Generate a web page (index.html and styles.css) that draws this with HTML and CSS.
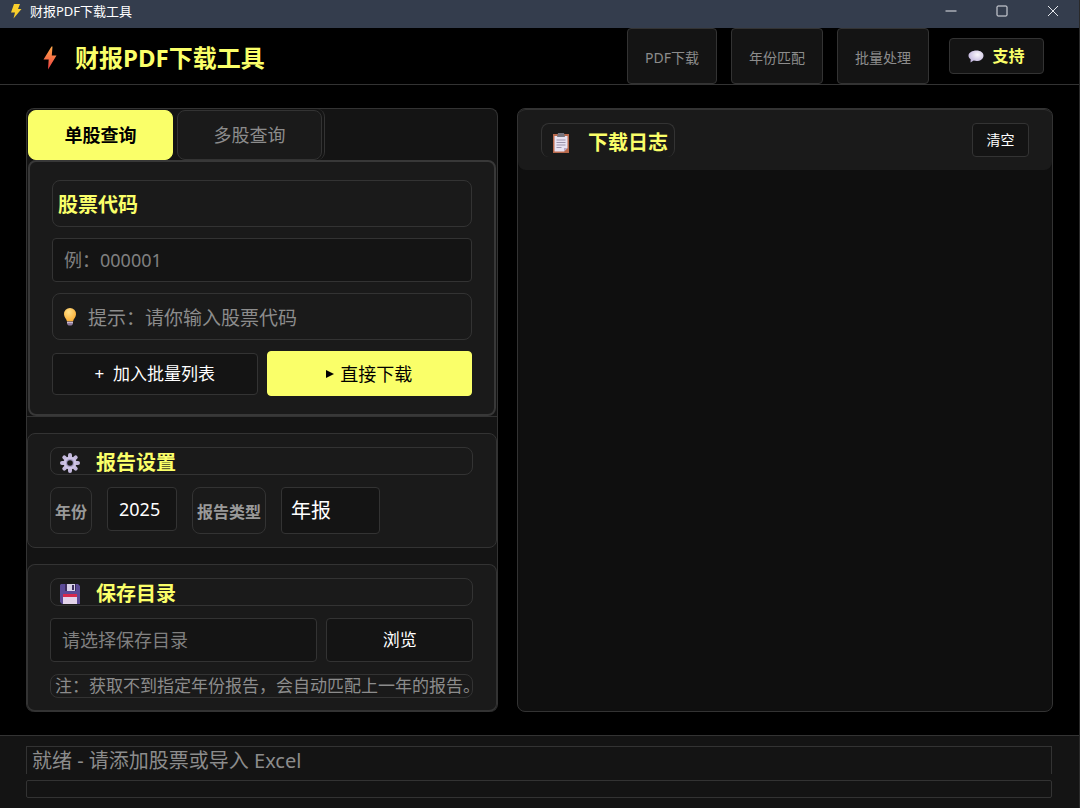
FILE: index.html
```html
<!DOCTYPE html>
<html lang="zh-CN">
<head>
    <meta charset="utf-8">
    <title>财报PDF下载工具</title>
    <link rel="stylesheet" href="styles.css">
</head>
<body>
    <div class="titlebar">
        <svg class="titlebar-icon" width="12" height="16" viewBox="0 0 12 16"><path d="M4 1h6L8 6h3.500L3.500 15.500 5 9.500H1z" fill="#f9cf2c"/></svg>
        <span class="titlebar-text">财报PDF下载工具</span>
        <button class="win-btn" aria-label="最小化"><svg width="12" height="12" viewBox="0 0 12 12"><path d="M.5 6h11"/></svg></button>
        <button class="win-btn" aria-label="最大化"><svg width="12" height="12" viewBox="0 0 12 12"><rect x="1" y="1" width="10" height="10" rx="1"/></svg></button>
        <button class="win-btn" aria-label="关闭"><svg width="12" height="12" viewBox="0 0 12 12"><path d="M1 1l10 10M11 1L1 11"/></svg></button>
    </div>

    <header class="header">
        <svg width="14" height="24" viewBox="0 0 14 24">
            <defs><linearGradient id="bolt" x1="0" y1="0" x2="0" y2="1"><stop offset="0" stop-color="#ffa94a"/><stop offset="1" stop-color="#ee3d42"/></linearGradient></defs>
            <path d="M8.500.5L.5 13.500h5.200L5 23.500 13.500 9.500H8.800L9.500.5z" fill="url(#bolt)"/>
        </svg>
        <h1>财报PDF下载工具</h1>
        <nav class="nav">
            <a href="#" class="nav-item">PDF下载</a>
            <a href="#" class="nav-item">年份匹配</a>
            <a href="#" class="nav-item">批量处理</a>
        </nav>
        <button class="btn support">
            <svg width="16" height="13" viewBox="0 0 16 13">
                <defs><radialGradient id="bubble" cx=".6" cy=".35" r=".7"><stop offset="0" stop-color="#faf7fb"/><stop offset="1" stop-color="#bdb0da"/></radialGradient></defs>
                <path d="M8.500.5C12.600.5 15.500 2.700 15.500 5.700s-3 5.300-7 5.300c-1 0-2-.1-2.800-.4L2.500 12.500l.2-3.200C1.300 8.400.5 7.200.5 5.700.5 2.700 4.300.5 8.500.5z" fill="url(#bubble)"/>
            </svg>
            支持
        </button>
    </header>

    <main class="main">
        <section class="panel">
            <div class="tab-view">
                <div class="tabs">
                    <button class="tab active">单股查询</button>
                    <button class="tab">多股查询</button>
                </div>
                <div class="query">
                    <label class="box query-label" for="code">股票代码</label>
                    <input class="field" id="code" type="text" placeholder="例：000001">
                    <div class="box hint">
                        <svg width="14" height="20" viewBox="0 0 14 20">
                            <defs><radialGradient id="bulb" cx=".4" cy=".3" r=".7"><stop offset="0" stop-color="#ffe08a"/><stop offset="1" stop-color="#fbae35"/></radialGradient></defs>
                            <path d="M7 1a6 6 0 0 1 6 6.200c0 3-2.500 4.300-3 7.300H4C3.500 11.500 1 10.200 1 7.200A6 6 0 0 1 7 1z" fill="url(#bulb)"/>
                            <path d="M4 14.500h6V17l-1.500 1.500h-3L4 17z" fill="#8f7b9c"/>
                            <path d="M4 15.500h6" stroke="#c9bbd0"/>
                        </svg>
                        提示：请你输入股票代码
                    </div>
                    <div class="actions">
                        <button class="btn add">+&nbsp; 加入批量列表</button>
                        <button class="btn download">
                            <svg width="8" height="8" viewBox="0 0 8 8"><path d="M0 0l8 4-8 4z" fill="#000"/></svg>
                            直接下载
                        </button>
                    </div>
                </div>
            </div>

            <div class="group settings">
                <h2 class="box group-title">
                    <svg width="20" height="20" viewBox="0 0 20 20">
                        <g stroke="#c3b8dc" stroke-width="4" stroke-linecap="round"><path d="M10 2v16M2 10h16M4.300 4.300l11.400 11.400M15.700 4.300L4.300 15.700"/></g>
                        <circle cx="10" cy="10" r="6.500" fill="#cdc3e4"/>
                        <circle cx="10" cy="10" r="4" fill="#a69bc4"/>
                        <circle cx="10" cy="10" r="2.800" fill="#1a1a1a"/>
                    </svg>
                    报告设置
                </h2>
                <div class="row">
                    <label class="box row-label" for="year">年份</label>
                    <input class="field year" id="year" type="text" value="2025">
                    <label class="box row-label" for="type">报告类型</label>
                    <select class="field type" id="type">
                        <option>年报</option>
                    </select>
                </div>
            </div>

            <div class="group save">
                <h2 class="box group-title">
                    <svg width="20" height="20" viewBox="0 0 20 20">
                        <path d="M1 0h17l2 2v18H2l-2-2V1z" fill="#5b4a96"/>
                        <path d="M5 0h11v7H5z" fill="#3c2c5e"/>
                        <path d="M7 0h8v7H7z" fill="#d9d2e8"/>
                        <path d="M12 1h2v5h-2z" fill="#3c2c5e"/>
                        <path d="M3 10h14v10H3z" fill="#e3d3ea"/>
                        <path d="M3 10h14v3H3z" fill="#d5294d"/>
                    </svg>
                    保存目录
                </h2>
                <div class="path">
                    <input class="field" type="text" aria-label="保存目录" placeholder="请选择保存目录">
                    <button class="btn">浏览</button>
                </div>
                <p class="box note">注：获取不到指定年份报告，会自动匹配上一年的报告。</p>
            </div>
        </section>

        <section class="log">
            <div class="log-header">
                <h2 class="log-title">
                    <svg width="16" height="20" viewBox="0 0 16 20">
                        <path d="M0 1h16v19H0z" fill="#b9694c"/>
                        <path d="M1.500 3h13v12L11 18.500H1.500z" fill="#e8e2f2"/>
                        <path d="M14.500 15H11v3.500z" fill="#b9aacb"/>
                        <path d="M5 0h6l1 4H4z" fill="#77747d"/>
                        <path d="M3.500 7h9M3.500 9.500h9M3.500 12h9M3.500 14.500h5" stroke="#9d94ad"/>
                    </svg>
                    下载日志
                </h2>
                <button class="btn clear">清空</button>
            </div>
            <textarea class="log-text" aria-label="下载日志" readonly></textarea>
        </section>
    </main>

    <footer class="statusbar">
        <div class="status">就绪 - 请添加股票或导入 Excel</div>
        <div class="progress" role="progressbar" aria-label="下载进度"></div>
    </footer>
</body>
</html>
```

FILE: styles.css
```css
* {
    box-sizing: border-box;
}
body {
    margin: 0;
    min-height: 100vh;
    display: flex;
    flex-direction: column;
    border-right: 1px solid #2a2a2a;
    background: #000;
    color: #fff;
    font-family: "Noto Sans", "Noto Sans CJK SC", sans-serif;
}
h1, h2, p {
    margin: 0;
}
svg {
    flex: none;
}
button, input, select, textarea {
    font-family: inherit;
    color: inherit;
    margin: 0;
}

/* window title bar */
.titlebar {
    display: flex;
    align-items: center;
    height: 28px;
    margin-right: -1px;
    padding: 0 2px 6px 10px;
    background: #343d4d;
    font-size: 13px;
    line-height: 20px;
}
.titlebar-text {
    margin: 0 auto 0 8px;
}
.win-btn {
    width: 51px;
    height: 22px;
    padding: 0;
    border: 0;
    background: none;
}
.win-btn svg {
    display: block;
    margin: auto;
    fill: none;
    stroke: #e4e7ec;
}

/* header */
.header {
    display: flex;
    align-items: center;
    height: 57px;
    padding: 0 35px 0 43px;
    border-bottom: 1px solid #333;
}
.header h1 {
    margin: 0 auto 0 18px;
    padding-top: 4px;
    font-size: 24px;
    line-height: 32px;
    color: #faff69;
}
.header > svg {
    margin-top: 4px;
}
.nav {
    display: flex;
    align-self: stretch;
    gap: 14px;
    margin-right: 20px;
}
.nav-item {
    display: flex;
    align-items: center;
    padding: 2px 17px 0;
    border: 1px solid #333;
    border-radius: 4px;
    background: #141414;
    color: #8c8c8c;
    font-size: 14px;
    text-decoration: none;
}
.btn {
    display: flex;
    align-items: center;
    justify-content: center;
    padding: 0;
    border: 1px solid #333;
    border-radius: 4px;
    background: #141414;
    font-size: 17px;
    line-height: 24px;
}
.support {
    gap: 8px;
    width: 95px;
    height: 36px;
    font-size: 16px;
    font-weight: bold;
    color: #faff69;
}

/* main area */
.main {
    flex: 1;
    display: grid;
    grid-template-columns: minmax(0, 472fr) minmax(0, 536fr);
    gap: 19px;
    padding: 23px 26px 23px 26px;
}
.panel {
    display: flex;
    flex-direction: column;
    border: 1px solid #333;
    border-bottom: 0;
    border-radius: 8px;
    background: #141414;
}
.tab-view {
    display: flex;
    flex-direction: column;
    border-bottom: 1px solid #333;
}
.tabs {
    align-self: flex-start;
    display: flex;
    gap: 4px;
    padding: 1px 2px 0 1px;
    border-right: 1px solid #333;
    border-radius: 8px;
}
.tab {
    width: 145px;
    height: 50px;
    padding: 0 0 2px;
    border: 1px solid #333;
    border-radius: 8px;
    background: #1a1a1a;
    color: #8c8c8c;
    font-size: 18px;
}
.tab.active {
    border-color: #faff69;
    background: #faff69;
    color: #000;
    font-weight: bold;
}
.query {
    display: flex;
    flex-direction: column;
    gap: 11px;
    margin: 0 1px;
    padding: 18px 22px;
    border: 2px solid #383838;
    border-radius: 8px;
    background: #1a1a1a;
}
.box {
    display: flex;
    align-items: center;
    padding: 0 5px;
    border: 1px solid #333;
    border-radius: 8px;
}
.field {
    width: 100%;
    height: 44px;
    padding: 0 11px;
    border: 1px solid #333;
    border-radius: 4px;
    background: #141414;
    font-size: 18px;
}
.field::placeholder {
    color: #808080;
    opacity: 1;
}
.query-label {
    height: 47px;
    font-size: 20px;
    font-weight: bold;
    color: #faff69;
}
.hint {
    gap: 11px;
    height: 47px;
    padding-left: 10px;
    font-size: 19px;
    color: #8c8c8c;
}
.actions {
    display: grid;
    grid-template-columns: 1fr 1fr;
    align-items: center;
    gap: 9px;
}
.add {
    height: 42px;
}
.download {
    gap: 6px;
    height: 45px;
    border-color: #faff69;
    background: #faff69;
    color: #000;
    font-size: 18px;
}

/* report settings and save folder */
.group {
    display: flex;
    flex-direction: column;
    gap: 12px;
    margin-top: 16px;
    padding: 13px 23px 13px 22px;
    border: 1px solid #333;
    border-radius: 8px;
    background: #1a1a1a;
}
.group-title {
    gap: 16px;
    height: 28px;
    padding: 4px 9px 0;
    font-size: 20px;
    line-height: 24px;
    color: #faff69;
}
.row {
    display: flex;
    gap: 15px;
}
.row-label {
    height: 47px;
    padding: 0 4px;
    font-size: 16px;
    font-weight: bold;
    white-space: nowrap;
    color: #999;
}
.year {
    width: 70px;
}
.type {
    width: 99px;
    height: 47px;
    padding: 0 9px;
    appearance: none;
    font-size: 20px;
}
.save {
    flex: 1;
    padding-bottom: 12px;
    border-bottom-width: 2px;
}
.path {
    display: grid;
    grid-template-columns: 268fr 147fr;
    gap: 9px;
}
.note {
    height: 24px;
    padding: 0 0 0 4px;
    font-size: 17px;
    line-height: 22px;
    white-space: nowrap;
    color: #8c8c8c;
}

/* download log */
.log {
    display: flex;
    flex-direction: column;
    border: 1px solid #333;
    border-radius: 8px;
    background: #0f0f0f;
}
.log-header {
    display: flex;
    align-items: center;
    justify-content: space-between;
    height: 61px;
    padding: 0 23px;
    border-top: 1px solid #333;
    border-radius: 8px;
    background: #1a1a1a;
}
.log-title {
    display: flex;
    align-items: center;
    gap: 19px;
    height: 34px;
    padding: 4px 6px 0 11px;
    border: 1px solid #333;
    border-bottom: 0;
    border-radius: 8px;
    font-size: 20px;
    line-height: 28px;
    color: #faff69;
}
.clear {
    width: 57px;
    height: 34px;
    font-size: 14px;
}
.log-text {
    flex: 1;
    padding: 12px;
    border: 0;
    border-radius: 8px;
    background: none;
    resize: none;
    font-size: 16px;
}

/* status bar */
.statusbar {
    display: flex;
    flex-direction: column;
    gap: 6px;
    height: 73px;
    padding: 10px 27px 10px 26px;
    border-top: 1px solid #333;
    background: #141414;
}
.status {
    height: 28px;
    padding-left: 5px;
    border: 1px solid #333;
    border-bottom: 0;
    font-size: 20px;
    line-height: 28px;
    color: #8c8c8c;
}
.progress {
    height: 18px;
    border: 1px solid #333;
    border-radius: 2px;
}
```
